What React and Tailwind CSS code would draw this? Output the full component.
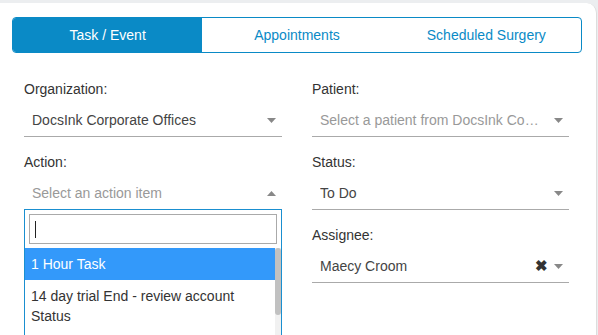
import React from "react";

function Arrow({ up = false }) {
  return (
    <svg width="9" height="5" viewBox="0 0 9 5" className="shrink-0">
      {up ? (
        <polygon points="0,5 9,5 4.5,0" fill="#888888" />
      ) : (
        <polygon points="0,0 9,0 4.5,5" fill="#888888" />
      )}
    </svg>
  );
}

function Field({ label, value, placeholder = false, up = false, clear = false, noBorder = false, children }) {
  return (
    <div className="relative flex flex-col">
      <div className="h-[20px] leading-[20px] text-[14px] text-[#333]">{label}</div>
      <div
        className={`mt-[1px] flex items-center pl-[8px] pr-[6px] pt-[10px] pb-[6px] ${
          noBorder ? "border-b border-transparent" : "border-b border-[#aaaaaa]"
        }`}
      >
        <span
          className={`flex-1 min-w-0 truncate h-[20px] leading-[20px] text-[14px] pr-[12px] ${
            placeholder ? "text-[#999]" : "text-[#444]"
          }`}
        >
          {value}
        </span>
        {clear && <span className="mr-[6px] text-[15px] font-bold leading-[20px] text-[#333]">✖</span>}
        <Arrow up={up} />
      </div>
      {children}
    </div>
  );
}

export default function App() {
  return (
    <div
      className="w-[598px] h-[335px] bg-[#eceef0] overflow-hidden"
      style={{ fontFamily: '"Liberation Sans", Arial, sans-serif' }}
    >
      <div className="mt-[3px] w-[597px] h-[332px] bg-white rounded-tr-[10px] border-r border-[#dddddd]">
        <div className="pt-[14px] pl-[12px]">
          <div className="flex w-[570px] h-[36px] border border-[#0a8ac6] rounded-[4px] overflow-hidden">
            <div className="flex-1 bg-[#0a8ac6] text-white text-[14px] flex items-center justify-center">
              Task / Event
            </div>
            <div className="flex-1 text-[#0a8ac6] text-[14px] flex items-center justify-center">
              Appointments
            </div>
            <div className="flex-1 text-[#0a8ac6] text-[14px] flex items-center justify-center">
              Scheduled Surgery
            </div>
          </div>
        </div>

        <div className="mt-[26px] pl-[24px] grid grid-cols-[258px_257px] gap-x-[30px]">
          <div className="flex flex-col gap-[15px]">
            <Field label="Organization:" value="DocsInk Corporate Offices" />
            <Field label="Action:" value="Select an action item" placeholder up noBorder>
              <div className="absolute left-0 top-[57px] w-[258px] h-[140px] border border-[#1a8fd0] bg-white">
                <div className="p-[4px] pb-[4px]">
                  <div className="h-[30px] border border-[#aaaaaa] flex items-center pl-[5px]">
                    <div className="w-[1px] h-[17px] bg-[#222]" />
                  </div>
                </div>
                <div className="flex">
                  <div className="flex-1 flex flex-col">
                    <div className="h-[32px] bg-[#3399fa] text-white text-[14px] flex items-center pl-[6px]">
                      1 Hour Task
                    </div>
                    <div className="pt-[6px] pl-[6px] pr-[4px] text-[14px] leading-[20px] text-[#333]">
                      14 day trial End - review account Status
                    </div>
                  </div>
                  <div className="w-[6px] h-[100px] bg-[#f1f1f1] flex flex-col">
                    <div className="h-[67px] bg-[#c1c1c1] rounded-[3px]" />
                  </div>
                </div>
              </div>
            </Field>
          </div>
          <div className="flex flex-col gap-[15px]">
            <Field label="Patient:" value="Select a patient from DocsInk Corporate Offices" placeholder />
            <Field label="Status:" value="To Do" />
            <Field label="Assignee:" value="Maecy Croom" clear />
          </div>
        </div>
      </div>
    </div>
  );
}
